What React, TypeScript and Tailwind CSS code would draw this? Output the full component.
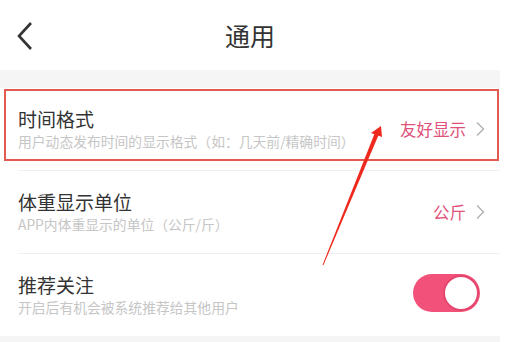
import React from "react";

const font = { fontFamily: '"Noto Sans CJK SC", "Noto Sans", sans-serif' };

type Row = { title: string; desc: string; value?: string; toggle?: boolean };

const rows: Row[] = [
  { title: "时间格式", desc: "用户动态发布时间的显示格式（如：几天前/精确时间）", value: "友好显示" },
  { title: "体重显示单位", desc: "APP内体重显示的单位（公斤/斤）", value: "公斤" },
  { title: "推荐关注", desc: "开启后有机会被系统推荐给其他用户", toggle: true },
];

// full-width punctuation gets a full em box, as on the phone
function Desc({ text }: { text: string }) {
  return (
    <>
      {text.split(/([（）：])/).map((part, i) => {
        if (part === "（") return <span key={i} className="inline-block w-[1em] text-right">{part}</span>;
        if (part === "）" || part === "：") return <span key={i} className="inline-block w-[1em] text-left">{part}</span>;
        return <React.Fragment key={i}>{part}</React.Fragment>;
      })}
    </>
  );
}

function Chevron() {
  return (
    <svg width="11" height="16" viewBox="0 0 11 16" className="ml-[9px]">
      <path d="M2 1.5 L8.5 8 L2 14.5" fill="none" stroke="#b0b0b0" strokeWidth="1.4" />
    </svg>
  );
}

function Toggle() {
  return (
    <div className="flex h-[38px] w-[67px] items-center justify-end rounded-full bg-[#f2527a] pr-[1px]">
      <div className="h-[36px] w-[36px] rounded-full border-2 border-[#e5466e] bg-white" />
    </div>
  );
}

export default function App() {
  return (
    <div lang="zh-CN" className="relative h-[342px] w-[508px] overflow-hidden bg-white" style={font}>
      <div className="w-[500px]">
        <div className="relative flex h-[70px] items-center justify-center">
          <svg width="20" height="30" viewBox="0 0 20 30" className="absolute left-[15px] top-[21px]">
            <path d="M16 2 L4 15 L16 28" fill="none" stroke="#333333" strokeWidth="2.6" />
          </svg>
          <span className="text-[25px] leading-none text-[#333333]">通用</span>
        </div>
        <div className="h-[18px] bg-[#f5f5f5]" />
        {rows.map((row, i) => (
          <div key={row.title}>
            {i > 0 && <div className="ml-[18px] h-px bg-[#f0f0f0]" />}
            <div className="flex h-[82px] items-center pl-[18px] pr-[14px]">
              <div className="flex flex-1 flex-col">
                <span className="text-[19px] leading-[24px] text-[#333333]">{row.title}</span>
                <span className="whitespace-nowrap text-[13.8px] leading-[20px] text-[#c6c6c6]">
                  <Desc text={row.desc} />
                </span>
              </div>
              {row.toggle ? (
                <div className="mr-[6px] -mt-[4px]">
                  <Toggle />
                </div>
              ) : (
                <div className="flex items-center">
                  <span className="text-[16.5px] text-[#e0527a]">{row.value}</span>
                  <Chevron />
                </div>
              )}
            </div>
          </div>
        ))}
        <div className="h-[10px] bg-[#f5f5f5]" />
      </div>

      {/* annotation overlay */}
      <div className="absolute left-[4px] top-[89px] h-[72px] w-[495px] border-2 border-[#e25a50]" />
      <svg className="absolute left-0 top-0" width="508" height="342" viewBox="0 0 508 342">
        <polygon points="322.5,265 323.5,265 379,134 375,132.5" fill="#ee2a1e" />
        <polygon points="381,126 371,133 382,137" fill="#ee2a1e" />
      </svg>
    </div>
  );
}
